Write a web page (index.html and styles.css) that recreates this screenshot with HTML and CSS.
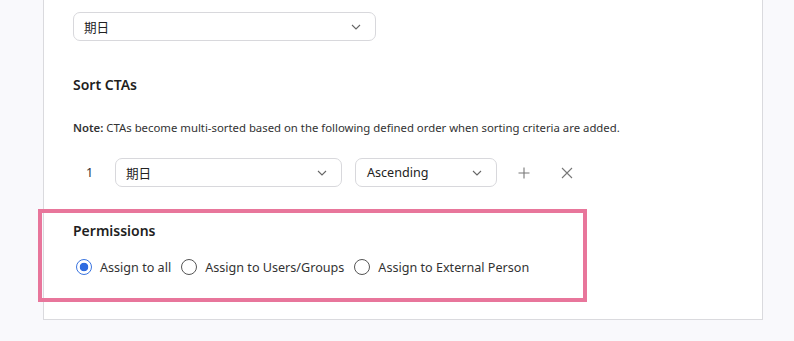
FILE: index.html
```html
<!DOCTYPE html>
<html>
<head>
<meta charset="utf-8">
<link rel="stylesheet" href="styles.css">
</head>
<body>
<div class="card">
  <div class="select select-wide">
    <span>期日</span>
    <svg class="chev" width="10" height="6" viewBox="0 0 10 6"><path d="M1 1l4 4 4-4" fill="none" stroke="#666" stroke-width="1.1"/></svg>
  </div>

  <h3 class="heading sort-heading">Sort CTAs</h3>
  <p class="note"><b>Note:</b> CTAs become multi-sorted based on the following defined order when sorting criteria are added.</p>

  <div class="sort-row">
    <span class="num">1</span>
    <div class="select select-field">
      <span>期日</span>
      <svg class="chev" width="10" height="6" viewBox="0 0 10 6"><path d="M1 1l4 4 4-4" fill="none" stroke="#666" stroke-width="1.1"/></svg>
    </div>
    <div class="select select-order">
      <span>Ascending</span>
      <svg class="chev" width="10" height="6" viewBox="0 0 10 6"><path d="M1 1l4 4 4-4" fill="none" stroke="#666" stroke-width="1.1"/></svg>
    </div>
    <svg class="icon plus" width="12" height="12" viewBox="0 0 12 12"><path d="M6 0.5v11M0.5 6h11" stroke="#777" stroke-width="1.1" fill="none"/></svg>
    <svg class="icon close" width="12" height="12" viewBox="0 0 12 12"><path d="M1 1l10 10M11 1L1 11" stroke="#777" stroke-width="1.1" fill="none"/></svg>
  </div>

  <section class="permissions">
    <h3 class="heading">Permissions</h3>
    <div class="radios">
      <label class="radio"><span class="circle checked"></span>Assign to all</label>
      <label class="radio"><span class="circle"></span>Assign to Users/Groups</label>
      <label class="radio"><span class="circle"></span>Assign to External Person</label>
    </div>
  </section>
</div>
</body>
</html>
```

FILE: styles.css
```css
html, body {
  margin: 0;
  padding: 0;
  background: #f9f9fc;
  font-family: "Noto Sans", "Open Sans", "Noto Sans CJK JP", sans-serif;
  color: #1f1f1f;
}

.card {
  margin-left: 43px;
  width: 720px;
  box-sizing: border-box;
  background: #fff;
  border: 1px solid #dadade;
  border-top: none;
  padding: 12px 0 17px 29px;
}

.select {
  display: flex;
  align-items: center;
  justify-content: space-between;
  height: 29px;
  box-sizing: border-box;
  border: 1px solid #d8d8dc;
  border-radius: 7px;
  padding: 0 14px 0 10px;
  font-size: 12.6px;
  color: #222;
}

.select-wide { width: 303px; }
.select-field { width: 227px; }
.select-order { width: 142px; margin-left: 13px; padding-left: 11px; }

.chev { flex: none; }

.heading {
  margin: 0;
  font-size: 14px;
  font-weight: 600;
  line-height: 20px;
  color: #1f1f1f;
}

.sort-heading { margin-top: 34px; }

.note {
  margin: 25px 0 0;
  font-size: 11.35px;
  line-height: 16px;
  color: #333;
}
.note b { font-weight: 600; }

.sort-row {
  display: flex;
  align-items: center;
  margin-top: 22px;
}

.num {
  width: 29px;
  padding-left: 13px;
  font-size: 12.6px;
  color: #333;
}

.icon { flex: none; }
.plus { margin-left: 21px; }
.close { margin-left: 31px; }

.permissions {
  margin: 22px 0 0 -35px;
  width: 549px;
  box-sizing: border-box;
  border: 4px solid #e8769b;
  padding: 8px 0 21px 31px;
}

.radios {
  display: flex;
  align-items: center;
  margin-top: 16px;
  height: 20px;
}

.radio {
  display: flex;
  align-items: center;
  font-size: 12.6px;
  color: #333;
  margin-right: 10px;
}

.radio:first-child { margin-left: 3px; }

.circle {
  width: 16px;
  height: 16px;
  box-sizing: border-box;
  border-radius: 50%;
  border: 1px solid #555;
  margin-right: 8px;
  background: #fff;
}

.circle.checked {
  border: 1px solid #3a74e0;
  background: radial-gradient(circle, #2f6be0 0 4px, #fff 4.6px);
}
```
